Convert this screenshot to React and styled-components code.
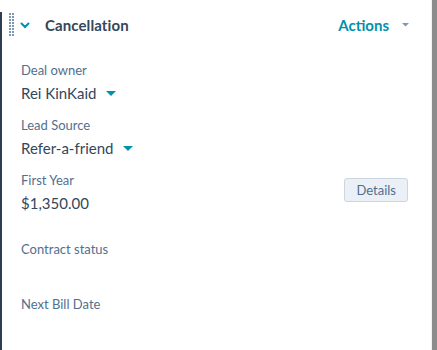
import React from 'react';
import styled, { createGlobalStyle } from 'styled-components';

const GlobalStyle = createGlobalStyle`
  html, body {
    margin: 0;
    padding: 0;
    background: #fff;
  }
  body {
    font-family: Lato, "Liberation Sans", sans-serif;
    color: #33475b;
  }
`;

const Page = styled.div`
  display: flex;
  width: 437px;
  height: 350px;
  overflow: hidden;
`;

const Rail = styled.div`
  width: 2px;
  margin-top: 12px;
  background: #2d3e50;
  flex-shrink: 0;
`;

const Panel = styled.div`
  flex: 1;
  display: flex;
  flex-direction: column;
  border-right: 1px solid #f2f2f2;
`;

const Scrollbar = styled.div`
  width: 5px;
  background: #8c8c8c;
  flex-shrink: 0;
`;

const Header = styled.div`
  height: 50px;
  display: flex;
  align-items: center;
  padding: 0 22px 0 7px;
`;

const Handle = styled.svg`
  width: 6px;
  height: 24px;
  margin-right: 5px;
`;

const Toggle = styled.svg`
  width: 10px;
  height: 7px;
  margin-right: 15px;
`;

const Title = styled.h3`
  margin: 0;
  flex: 1;
  font-size: 15px;
  font-weight: 700;
  letter-spacing: 0.1px;
  color: #33475b;
`;

const Actions = styled.button`
  display: flex;
  align-items: center;
  gap: 13px;
  border: 0;
  background: none;
  padding: 0;
  font: inherit;
  font-size: 15px;
  font-weight: 700;
  color: #0091ae;
`;

const Body = styled.div`
  padding: 11px 23px 0 19px;
`;

const Field = styled.div`
  display: flex;
  align-items: flex-start;
  justify-content: space-between;
  margin-bottom: ${p => (p.$extra ? 25 : 11)}px;
`;

const Label = styled.div`
  font-size: 13px;
  line-height: 18px;
  color: #516f90;
`;

const Value = styled.div`
  display: flex;
  align-items: center;
  gap: 10px;
  margin-top: 2px;
  height: 24px;
  font-size: 15px;
  color: #33475b;
`;

const Caret = ({ color = '#0091ae', w = 10 }) => (
  <svg width={w} height={w / 2} viewBox="0 0 10 5">
    <path d="M0 0h10L5 5z" fill={color} />
  </svg>
);

const DetailsButton = styled.button`
  margin-top: 7px;
  height: 24px;
  padding: 0 11px;
  border: 1px solid #cbd6e2;
  border-radius: 3px;
  background: #eaf0f6;
  font: inherit;
  font-size: 13px;
  color: #506e91;
`;

const dots = [];
for (let r = 0; r < 8; r++) {
  for (let c = 0; c < 2; c++) {
    dots.push(<rect key={`${r}-${c}`} x={c * 3} y={r * 3} width="2" height="2" />);
  }
}

const fields = [
  { label: 'Deal owner', value: 'Rei KinKaid', dropdown: true },
  { label: 'Lead Source', value: 'Refer-a-friend', dropdown: true },
  { label: 'First Year', value: '$1,350.00', button: 'Details' },
  { label: 'Contract status', value: '' },
  { label: 'Next Bill Date', value: '' },
];

export default function App() {
  return (
    <Page>
      <GlobalStyle />
      <Rail />
      <Panel>
        <Header>
          <Handle viewBox="0 0 6 24" fill="#7c98b6">{dots}</Handle>
          <Toggle viewBox="0 0 10 7">
            <path d="M1.5 1.5L5 5l3.5-3.5" stroke="#0091ae" strokeWidth="2" fill="none" strokeLinecap="round" />
          </Toggle>
          <Title>Cancellation</Title>
          <Actions>
            Actions
            <Caret color="#7c98b6" w={7} />
          </Actions>
        </Header>
        <Body>
          {fields.map(f => (
            <Field key={f.label} $extra={!!f.button}>
              <div>
                <Label>{f.label}</Label>
                <Value>
                  {f.value}
                  {f.dropdown && <Caret />}
                </Value>
              </div>
              {f.button && <DetailsButton>{f.button}</DetailsButton>}
            </Field>
          ))}
        </Body>
      </Panel>
      <Scrollbar />
    </Page>
  );
}
